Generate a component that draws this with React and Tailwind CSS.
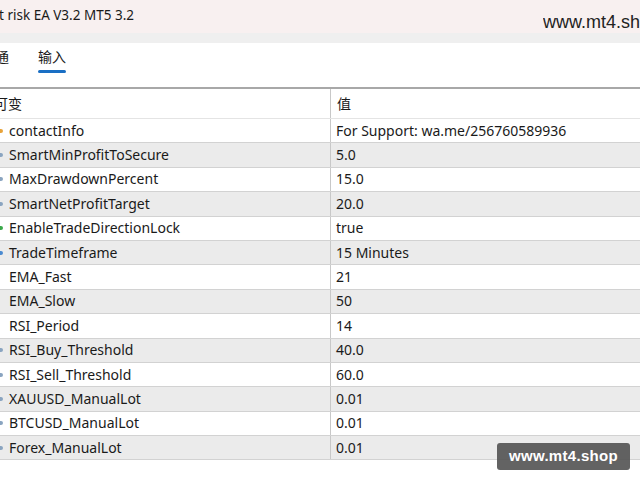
import React from "react";

const rows = [
  ["contactInfo", "For Support: wa.me/256760589936", "#e8a33a"],
  ["SmartMinProfitToSecure", "5.0", "#8aa4c0"],
  ["MaxDrawdownPercent", "15.0", "#8aa4c0"],
  ["SmartNetProfitTarget", "20.0", "#8aa4c0"],
  ["EnableTradeDirectionLock", "true", "#3aa84a"],
  ["TradeTimeframe", "15 Minutes", "#4a8ad0"],
  ["EMA_Fast", "21", null],
  ["EMA_Slow", "50", null],
  ["RSI_Period", "14", null],
  ["RSI_Buy_Threshold", "40.0", "#8aa4c0"],
  ["RSI_Sell_Threshold", "60.0", "#8aa4c0"],
  ["XAUUSD_ManualLot", "0.01", "#8aa4c0"],
  ["BTCUSD_ManualLot", "0.01", "#8aa4c0"],
  ["Forex_ManualLot", "0.01", "#8aa4c0"],
];

export default function App() {
  return (
    <div
      className="relative w-[640px] h-[480px] overflow-hidden bg-white text-[#1a1a1a]"
      style={{ fontFamily: '"Noto Sans", "Noto Sans CJK SC", sans-serif' }}
    >
      <div className="h-[33px] bg-[#f8f0f0] flex items-start">
        <span className="text-[13.5px] leading-[33px] -ml-[1px] -mt-[1px] whitespace-nowrap">t risk EA V3.2 MT5 3.2</span>
        <div className="ml-auto w-[97px] overflow-hidden mt-[13px]">
          <span
            className="block text-[18px] leading-[18px] whitespace-nowrap text-[#222]"
            style={{ fontFamily: '"Liberation Sans", Arial, sans-serif' }}
          >
            www.mt4.sh
          </span>
        </div>
      </div>
      <div className="h-[10px] bg-[#efefef]" />
      <div className="h-[44px] flex items-start">
        <div className="-ml-[5px] mt-[6px] text-[14px] leading-[16px]">通</div>
        <div className="ml-[29px] mt-[6px] flex flex-col items-center">
          <span className="text-[14px] leading-[16px]">输入</span>
          <div className="mt-[5px] h-[3px] w-[28px] rounded-full bg-[#1a6fc4]" />
        </div>
      </div>
      <div className="h-[2px] bg-[#a8a8a8]" />
      <div className="flex h-[30px] border-b border-[#e4e4e4]">
        <div className="w-[337px] shrink-0 border-r border-[#c8c8c8] -ml-[6px] text-[14px] leading-[30px]">可变</div>
        <div className="pl-[6px] text-[14px] leading-[30px]">值</div>
      </div>
      {rows.map(([k, v, c], i) => (
        <div
          key={k}
          className={`flex h-[24.4px] border-b border-[#d2d2d2] ${i % 2 === 1 ? "bg-[#ebebeb]" : "bg-white"}`}
        >
          <div className="w-[331px] shrink-0 border-r border-[#c8c8c8] flex items-center text-[14px]">
            <div className="w-[9px] flex items-center">
              {c && <div className="w-[3px] h-[4px] rounded-r-full" style={{ background: c }} />}
            </div>
            <span className="leading-none">{k}</span>
          </div>
          <div className="pl-[5px] flex items-center text-[14px]">
            <span className="leading-none">{v}</span>
          </div>
        </div>
      ))}
      <div
        className="absolute left-[497px] top-[443px] w-[133px] h-[27px] rounded-[3px] bg-[#525252]/90 text-white text-[15px] flex items-center justify-center font-bold tracking-[0.3px]"
        style={{ fontFamily: '"Liberation Sans", Arial, sans-serif' }}
      >
        www.mt4.shop
      </div>
    </div>
  );
}
